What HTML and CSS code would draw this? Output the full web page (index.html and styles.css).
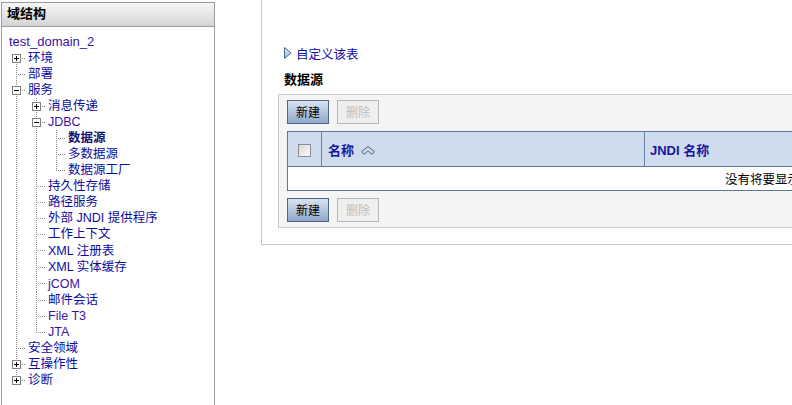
FILE: index.html
```html
<!DOCTYPE html>
<html lang="zh">
<head>
<meta charset="utf-8">
<title>域结构</title>
<link rel="stylesheet" href="styles.css">
</head>
<body>
<div class="page">
  <aside class="panel">
    <div class="panel-head">域结构</div>
    <div class="tree">
      <div class="row root"><a class="lk visited">test_domain_2</a></div>
      <div class="row"><span class="c first"><i class="bx plus"></i></span><a class="lk">环境</a></div>
      <div class="row"><span class="c tee"></span><a class="lk">部署</a></div>
      <div class="row"><span class="c tee"><i class="bx minus"></i></span><a class="lk">服务</a></div>
      <div class="row"><span class="c pipe"></span><span class="c tee"><i class="bx plus"></i></span><a class="lk">消息传递</a></div>
      <div class="row"><span class="c pipe"></span><span class="c tee"><i class="bx minus"></i></span><a class="lk visited">JDBC</a></div>
      <div class="row"><span class="c pipe"></span><span class="c pipe"></span><span class="c tee"></span><a class="lk cur">数据源</a></div>
      <div class="row"><span class="c pipe"></span><span class="c pipe"></span><span class="c tee"></span><a class="lk">多数据源</a></div>
      <div class="row"><span class="c pipe"></span><span class="c pipe"></span><span class="c elbow"></span><a class="lk">数据源工厂</a></div>
      <div class="row"><span class="c pipe"></span><span class="c tee"></span><a class="lk">持久性存储</a></div>
      <div class="row"><span class="c pipe"></span><span class="c tee"></span><a class="lk">路径服务</a></div>
      <div class="row"><span class="c pipe"></span><span class="c tee"></span><a class="lk">外部 JNDI 提供程序</a></div>
      <div class="row"><span class="c pipe"></span><span class="c tee"></span><a class="lk">工作上下文</a></div>
      <div class="row tall"><span class="c pipe"></span><span class="c tee"></span><a class="lk">XML 注册表</a></div>
      <div class="row"><span class="c pipe"></span><span class="c tee"></span><a class="lk">XML 实体缓存</a></div>
      <div class="row tall"><span class="c pipe"></span><span class="c tee"></span><a class="lk visited">jCOM</a></div>
      <div class="row"><span class="c pipe"></span><span class="c tee"></span><a class="lk">邮件会话</a></div>
      <div class="row"><span class="c pipe"></span><span class="c tee"></span><a class="lk visited">File T3</a></div>
      <div class="row"><span class="c pipe"></span><span class="c elbow"></span><a class="lk visited">JTA</a></div>
      <div class="row"><span class="c tee"></span><a class="lk">安全领域</a></div>
      <div class="row"><span class="c tee"><i class="bx plus"></i></span><a class="lk">互操作性</a></div>
      <div class="row"><span class="c elbow"><i class="bx plus"></i></span><a class="lk">诊断</a></div>
    </div>
  </aside>

  <main class="main">
    <div class="box">
      <div class="custom">
        <svg class="tri" width="8" height="12" viewBox="0 0 8 12">
          <defs>
            <linearGradient id="tg" x1="0" y1="0" x2="0" y2="1">
              <stop offset="0" stop-color="#e6eef8"/>
              <stop offset="1" stop-color="#9fb3cf"/>
            </linearGradient>
          </defs>
          <polygon points="0.5,0.5 7,6 0.5,11.5" fill="url(#tg)" stroke="#4b6a98" stroke-width="1"/>
        </svg>
        <a class="lk">自定义该表</a>
      </div>
      <h2 class="title">数据源</h2>
      <div class="wrap">
        <div class="btns">
          <button class="btn">新建</button>
          <button class="btn off">删除</button>
        </div>
        <table class="grid">
          <thead>
            <tr>
              <th class="chk"><span class="cb"></span></th>
              <th class="name">名称
                <svg class="sort" width="14" height="9" viewBox="0 0 14 9">
                  <polygon points="0.5,5.5 7,0.5 13.5,5.5 11,8.5 7,5 3,8.5" fill="#c9d5e5" stroke="#4f6586" stroke-width="1"/>
                </svg>
              </th>
              <th class="jndi">JNDI 名称</th>
            </tr>
          </thead>
          <tbody>
            <tr><td colspan="3" class="empty">没有将要显示的项目</td></tr>
          </tbody>
        </table>
        <div class="btns">
          <button class="btn">新建</button>
          <button class="btn off">删除</button>
        </div>
      </div>
    </div>
  </main>
</div>
</body>
</html>
```

FILE: styles.css
```css
html, body {
  margin: 0;
  padding: 0;
  background: #fff;
  overflow: hidden;
  width: 792px;
  height: 405px;
}

body {
  font-family: "Liberation Sans", "Noto Sans CJK SC", sans-serif;
  font-size: 12.5px;
  color: #000;
}

.page {
  display: flex;
  align-items: flex-start;
  width: 792px;
}

/* ---------- left panel ---------- */
.panel {
  flex: 0 0 214px;
  box-sizing: border-box;
  width: 214px;
  height: 420px;
  margin: 2px 0 0 1px;
  border: 1px solid #9a9a9a;
  background: #fff;
}

.panel-head {
  height: 23px;
  line-height: 22px;
  padding-left: 5px;
  border-bottom: 1px solid #9a9a9a;
  background: linear-gradient(#f7f7f7, #d4d4d4);
  font-weight: bold;
  font-size: 13px;
}

.tree {
  padding: 7px 0 0 4px;
}

.row {
  display: flex;
  height: 16px;
  line-height: 16px;
  white-space: nowrap;
}

.row.tall {
  height: 17px;
  line-height: 18px;
}

.row.tall .c {
  height: 17px;
}

.row.root {
  padding-left: 3px;
  line-height: 16px;
}

.lk {
  color: #0c0ca0;
  text-decoration: none;
  margin-left: 2px;
}

.lk.visited {
  color: #3a12a6;
}

.lk.cur {
  font-weight: bold;
  color: #111170;
}

.root .lk {
  margin-left: 0;
  font-size: 13px;
}

.c {
  display: block;
  flex: 0 0 20px;
  width: 20px;
  height: 16px;
}

.pipe {
  background: repeating-linear-gradient(to bottom, #8a8a8a 0 1px, transparent 1px 2px) 10px 0 / 1px 100% no-repeat;
}

.tee {
  background:
    repeating-linear-gradient(to right, #8a8a8a 0 1px, transparent 1px 2px) 12px 8px / 8px 1px no-repeat,
    repeating-linear-gradient(to bottom, #8a8a8a 0 1px, transparent 1px 2px) 10px 0 / 1px 100% no-repeat;
}

.elbow {
  background:
    repeating-linear-gradient(to right, #8a8a8a 0 1px, transparent 1px 2px) 12px 8px / 8px 1px no-repeat,
    repeating-linear-gradient(to bottom, #8a8a8a 0 1px, transparent 1px 2px) 10px 0 / 1px 9px no-repeat;
}

.first {
  background:
    repeating-linear-gradient(to right, #8a8a8a 0 1px, transparent 1px 2px) 12px 8px / 8px 1px no-repeat,
    repeating-linear-gradient(to bottom, #8a8a8a 0 1px, transparent 1px 2px) 10px 8px / 1px 8px no-repeat;
}

.bx {
  display: block;
  box-sizing: border-box;
  width: 9px;
  height: 9px;
  margin: 4px 0 0 6px;
  border: 1px solid #808080;
  background: #fff;
}

.bx.plus {
  background:
    linear-gradient(#000, #000) center / 5px 1px no-repeat,
    linear-gradient(#000, #000) center / 1px 5px no-repeat,
    #fff;
}

.bx.minus {
  background:
    linear-gradient(#000, #000) center / 5px 1px no-repeat,
    #fff;
}

/* ---------- main ---------- */
.main {
  flex: 1 0 auto;
  margin-left: 46px;
}

.box {
  box-sizing: border-box;
  width: 700px;
  height: 245px;
  padding: 45px 0 0 16px;
  border-left: 1px solid #c8c8c8;
  border-bottom: 1px solid #c8c8c8;
}

.custom {
  display: flex;
  align-items: center;
  height: 16px;
  padding-left: 6px;
}

.custom .tri {
  display: block;
  margin-right: 4px;
}

.custom .lk {
  margin-left: 0;
  color: #0c0ca0;
}

.title {
  margin: 11px 0 0 6px;
  height: 16px;
  line-height: 16px;
  font-size: 13px;
  font-weight: bold;
}

.wrap {
  box-sizing: border-box;
  width: 680px;
  margin-top: 6px;
  padding: 5px 8px 5px 8px;
  border: 1px solid #cccccc;
  border-right: none;
  background: #f4f4f4;
}

.btns {
  display: flex;
  gap: 8px;
}

.btn {
  box-sizing: border-box;
  width: 42px;
  height: 24px;
  padding: 0;
  border: 1px solid #4d6688;
  background: linear-gradient(#d9e3f0, #8ea8ca);
  font-family: "Noto Sans CJK SC", sans-serif;
  font-size: 12px;
  color: #000;
  line-height: 22px;
}

.btn.off {
  border-color: #b6b6b6;
  background: #efefef;
  color: #c0c0c0;
}

.grid {
  width: 700px;
  margin: 7px 0;
  border-collapse: collapse;
  border: 1px solid #5d7799;
  background: #fff;
}

.grid th {
  height: 34px;
  padding: 0;
  background: #cfdcee;
  border-left: 1px solid #6a84a8;
  border-bottom: 1px solid #5d7799;
  text-align: left;
  font-weight: bold;
  font-size: 13px;
  color: #1717a0;
  white-space: nowrap;
}

.grid th.chk {
  width: 33px;
  border-left: none;
  text-align: center;
}

.grid th.name {
  width: 316px;
  padding-left: 6px;
}

.grid th.jndi {
  padding-left: 5px;
}

.cb {
  display: inline-block;
  box-sizing: border-box;
  width: 13px;
  height: 13px;
  vertical-align: middle;
  border: 1px solid #8d8d8d;
  background: linear-gradient(135deg, #d8d8d8, #fbfbfb);
}

.sort {
  vertical-align: 0;
  margin-left: 3px;
}

.grid td.empty {
  height: 23px;
  padding: 0 0 0 437px;
  text-align: left;
  white-space: nowrap;
  color: #000;
}
```
